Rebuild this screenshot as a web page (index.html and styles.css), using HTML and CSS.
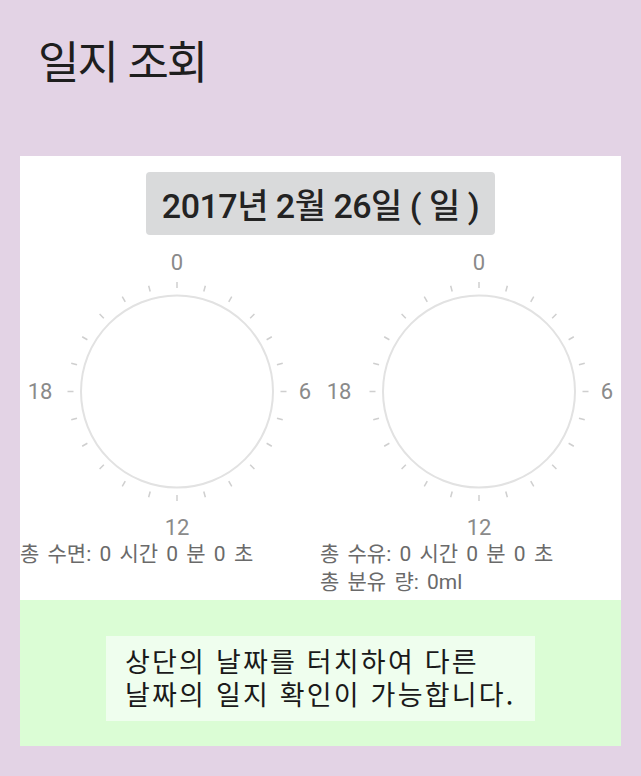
FILE: index.html
```html
<!DOCTYPE html>
<html lang="ko">
<head>
    <meta charset="UTF-8">
    <meta name="viewport" content="width=device-width, initial-scale=1.0">
    <title>일지 조회</title>
    <link rel="stylesheet" href="styles.css">
</head>

<body>
    <!-- 제목 -->
    <header class="titulo">
        <h1>일지 조회</h1>
    </header>

    <!-- 일지 패널 -->
    <section class="panel">
        <div class="panel-blanco">
            <div class="fecha-fila">
                <button class="boton-fecha">2017년 2월 26일 ( 일 )</button>
            </div>

            <div class="relojes">
                <div class="reloj-col">
                    <svg class="reloj" id="reloj-sueno" width="300" height="300" viewBox="0 0 300 300">
                        <circle cx="157" cy="151.5" r="96" class="aro"></circle>
                        <g class="marcas" transform="translate(157 151.5)"></g>
                        <text x="157" y="30" class="hora">0</text>
                        <text x="285" y="159" class="hora">6</text>
                        <text x="157" y="295" class="hora">12</text>
                        <text x="20" y="159" class="hora">18</text>
                    </svg>
                    <p class="dato">총 수면: 0 시간 0 분 0 초</p>
                </div>
                <div class="reloj-col">
                    <svg class="reloj" id="reloj-leche" width="300" height="300" viewBox="0 0 300 300">
                        <circle cx="159" cy="151.5" r="96" class="aro"></circle>
                        <g class="marcas" transform="translate(159 151.5)"></g>
                        <text x="159" y="30" class="hora">0</text>
                        <text x="287" y="159" class="hora">6</text>
                        <text x="159" y="295" class="hora">12</text>
                        <text x="19" y="159" class="hora">18</text>
                    </svg>
                    <p class="dato">총 수유: 0 시간 0 분 0 초</p>
                    <p class="dato">총 분유 량: 0ml</p>
                </div>
            </div>
        </div>

        <!-- 안내 -->
        <div class="aviso">
            <p class="aviso-texto">상단의 날짜를 터치하여 다른<br>날짜의 일지 확인이 가능합니다.</p>
        </div>
    </section>

    <script>
        // 24시간 눈금 그리기
        document.querySelectorAll('.marcas').forEach(grupo => {
            for (let h = 0; h < 24; h++) {
                const linea = document.createElementNS('http://www.w3.org/2000/svg', 'line');
                linea.setAttribute('x1', 0);
                linea.setAttribute('y1', -103.5);
                linea.setAttribute('x2', 0);
                linea.setAttribute('y2', -109.5);
                linea.setAttribute('transform', `rotate(${h * 15})`);
                grupo.appendChild(linea);
            }
        });
    </script>
</body>
</html>
```

FILE: styles.css
```css
/* General */
body {
    margin: 0;
    background: #e3d3e5;
    font-family: 'Noto Sans CJK KR', sans-serif;
    color: #222;
}

/* 제목 */
.titulo {
    height: 156px;
    padding: 0 38px;
    box-sizing: border-box;
}

.titulo h1 {
    margin: 0;
    padding-top: 30px;
    font-size: 45px;
    font-weight: 400;
    line-height: 60px;
    letter-spacing: -2px;
    color: #1e1e1e;
}

/* 패널 */
.panel {
    margin: 0 20px;
    width: 601px;
}

.panel-blanco {
    background: #ffffff;
    height: 444px;
}

.fecha-fila {
    display: flex;
    justify-content: center;
    padding-top: 16px;
}

.boton-fecha {
    width: 349px;
    height: 63px;
    border: none;
    border-radius: 4px;
    background: #d9dadb;
    color: #232323;
    font-family: Roboto, 'Noto Sans CJK KR', sans-serif;
    font-size: 34px;
    font-weight: 500;
    letter-spacing: -0.5px;
    padding: 0;
}

/* 시계 */
.relojes {
    display: grid;
    grid-template-columns: 300px 301px;
    padding-top: 5px;
}

.reloj {
    display: block;
}

.aro {
    fill: none;
    stroke: #e2e2e2;
    stroke-width: 2;
}

.marcas line {
    stroke: #cfcfcf;
    stroke-width: 1.5;
}

.hora {
    font-family: Roboto, sans-serif;
    font-size: 22px;
    fill: #8a8a8a;
    text-anchor: middle;
}

.dato {
    margin: 0;
    font-family: Roboto, 'Noto Sans CJK KR', sans-serif;
    font-size: 21px;
    line-height: 28px;
    color: #6a6a6a;
    word-spacing: 3px;
    white-space: nowrap;
}

/* 안내 */
.aviso {
    background: #dbfdd5;
    height: 146px;
    padding-top: 36px;
    box-sizing: border-box;
    display: flex;
    justify-content: center;
}

.aviso-texto {
    margin: 0;
    width: 429px;
    height: 85px;
    box-sizing: border-box;
    padding: 8px 0 0 19px;
    background: #effeee;
    font-size: 27px;
    line-height: 33px;
    color: #1a1a1a;
    letter-spacing: 2.2px;
    white-space: nowrap;
}
```
